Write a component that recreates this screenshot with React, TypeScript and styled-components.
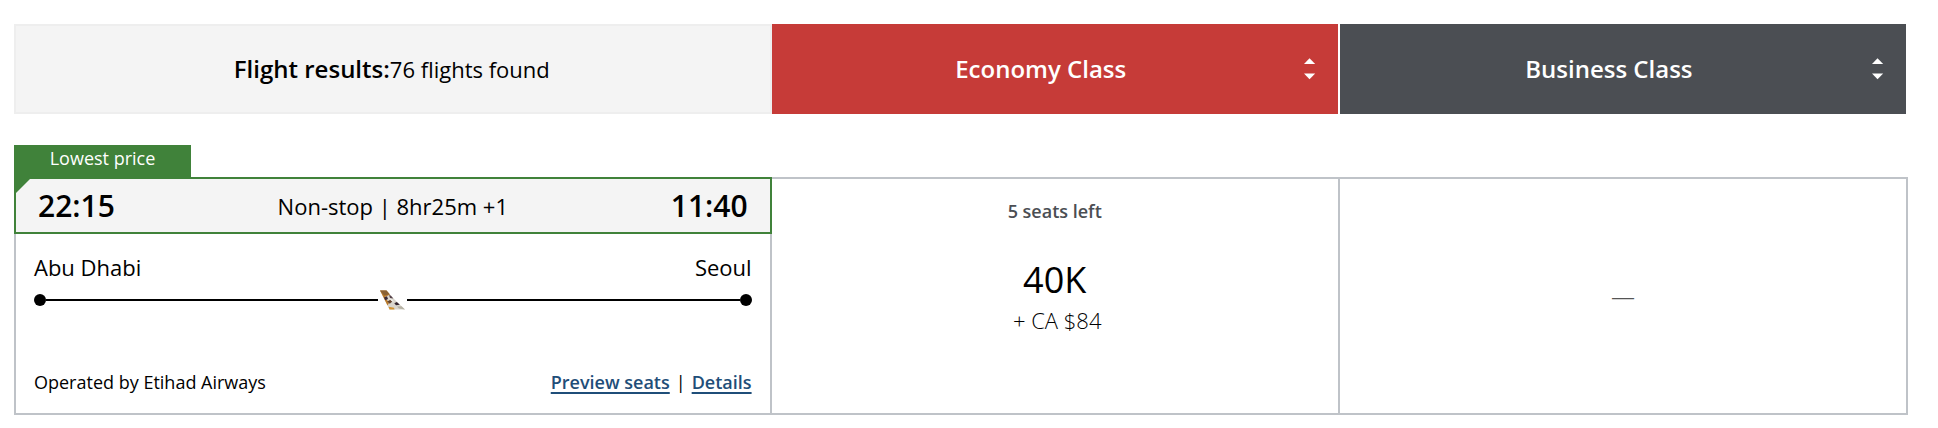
import React from "react";
import styled, { createGlobalStyle } from "styled-components";

const line = "#bfc3c8";
const green = "#40823a";

const GlobalStyle = createGlobalStyle`
  *, *::before, *::after { box-sizing: border-box; }
  body {
    margin: 0;
    background: #fff;
    color: #000;
    font-family: "Open Sans", "Noto Sans", sans-serif;
    font-size: 22px;
    line-height: 30px;
  }
`;

const Page = styled.main`
  padding: 24px 30px 12px 14px;
`;

const Columns = styled.div`
  display: grid;
  grid-template-columns: 40% 30% 30%;
`;

const Summary = styled.div`
  display: flex;
  align-items: center;
  justify-content: center;
  height: 90px;
  padding-right: 2px;
  background: #f4f4f4;
  border: 2px solid #eee;
  white-space: pre;
`;

const SummaryTitle = styled.h1`
  margin: 0;
  font-size: 24px;
  font-weight: 600;
`;

const CabinButton = styled.button<{ $color: string }>`
  display: flex;
  align-items: center;
  height: 90px;
  margin-right: 2px;
  padding: 0 22px 0 6px;
  border: 0;
  background: ${(p) => p.$color};
  color: #fff;
  font: inherit;
  font-size: 24px;
  font-weight: 600;
  cursor: pointer;
`;

const CabinName = styled.span`
  flex: 1;
  text-align: center;
`;

const Flight = styled.article`
  margin-top: 31px;
`;

const Tag = styled.div`
  width: 177px;
  height: 32px;
  background: ${green};
  color: #fff;
  font-size: 18px;
  font-weight: 500;
  line-height: 26px;
  text-align: center;
`;

const Itinerary = styled.section`
  display: flex;
  flex-direction: column;
`;

const Times = styled.div`
  position: relative;
  display: flex;
  align-items: center;
  justify-content: space-between;
  height: 57px;
  padding: 0 22px;
  border: 2px solid ${green};
  background: #f4f4f4;

  &::before {
    content: "";
    position: absolute;
    top: 0;
    left: 0;
    border-top: 14px solid ${green};
    border-right: 14px solid transparent;
  }
`;

const Time = styled.time`
  font-size: 30px;
  font-weight: 600;
`;

const Route = styled.div`
  padding: 18px 18px;
  border: solid ${line};
  border-width: 0 2px 2px;
`;

const Row = styled.div`
  display: flex;
  justify-content: space-between;
`;

const Track = styled.div`
  display: flex;
  align-items: center;
  height: 20px;
  margin: 8px 0 59px;
`;

const Stop = styled.span`
  width: 12px;
  height: 12px;
  border-radius: 50%;
  background: #000;
`;

const Leg = styled.span`
  flex: 1;
  height: 2px;
  background: #000;
`;

const Tail = styled.svg`
  width: 25px;
  height: 20px;
  margin: 0 2px;
`;

const Footer = styled(Row)`
  font-size: 18px;
  line-height: 26px;
`;

const Links = styled.div`
  display: flex;
  gap: 6px;
`;

const Link = styled.a`
  color: #1f4e79;
  font-weight: 600;
  text-decoration: underline;
  text-decoration-thickness: 2px;
  text-underline-offset: 3px;
`;

const Fare = styled.section`
  display: flex;
  flex-direction: column;
  align-items: center;
  padding-top: 17px;
  border: solid ${line};
  border-width: 2px 2px 2px 0;
`;

const NoFare = styled(Fare)`
  justify-content: center;
  padding-top: 0;
  color: #555;
  font-size: 24px;
  font-weight: 300;
`;

const Seats = styled.div`
  color: #4b4e53;
  font-size: 18px;
  font-weight: 600;
`;

const Points = styled.div`
  margin-top: 29px;
  font-size: 36px;
  line-height: 50px;
`;

const Cash = styled.div`
  padding-left: 5px;
  font-weight: 300;
`;

const SortIcon = () => (
  <svg width="12" height="22" viewBox="0 0 12 22" fill="#fff" aria-hidden="true">
    <path d="M5.5 0.3 11.2 6H0Z" />
    <path d="M0 15.4H11.2L5.5 21.3Z" />
  </svg>
);

const AirlineTail = () => (
  <Tail viewBox="0 0 25 20" role="img" aria-label="Etihad Airways">
    <path d="M0 .4H6.5L14 9 25 19.6H9.5Z" fill="#d9d5cc" />
    <path d="M0 .4H6.5L10 4.6 5 7 9 13 7.5 15.5Z" fill="#b97b2c" />
    <path d="M0 .4H6.5L9.5 4.2 4 5.5Z" fill="#8b6234" />
    <path d="M4 7.5 7 6.3 8 9 5.3 10.3Z" fill="#3a2a38" />
    <path d="M9 5 11 5.8 13.3 8.6 10 8Z" fill="#54414a" />
    <path d="M7.2 11.6 10.5 9.8 12.3 11.5 9.8 13.8Z" fill="#63432e" />
    <path d="M14.3 13.2 16.8 12 19.8 14.7 16 15.2Z" fill="#33252f" />
    <path d="M9 8.3 12.5 9.4 14 12.2 11.5 11Z" fill="#f0eee9" />
    <path d="M8.5 16.8 14 17.8 14.5 19.6H9.5Z" fill="#d1912f" />
    <path d="M17 16.5 21.5 16.3 25 19.6 19 18.5Z" fill="#b6b2a4" />
  </Tail>
);

export default function App() {
  return (
    <>
      <GlobalStyle />
      <Page>
        <Columns>
          <Summary>
            <SummaryTitle>Flight results:</SummaryTitle>
            <span>76 flights found</span>
          </Summary>
          <CabinButton type="button" $color="#c63b38">
            <CabinName>Economy Class</CabinName>
            <SortIcon />
          </CabinButton>
          <CabinButton type="button" $color="#4b4e53">
            <CabinName>Business Class</CabinName>
            <SortIcon />
          </CabinButton>
        </Columns>

        <Flight>
          <Tag>Lowest price</Tag>
          <Columns>
            <Itinerary>
              <Times>
                <Time>22:15</Time>
                <span>Non-stop | 8hr25m +1</span>
                <Time>11:40</Time>
              </Times>
              <Route>
                <Row>
                  <span>Abu Dhabi</span>
                  <span>Seoul</span>
                </Row>
                <Track>
                  <Stop />
                  <Leg />
                  <AirlineTail />
                  <Leg />
                  <Stop />
                </Track>
                <Footer>
                  <span>Operated by Etihad Airways</span>
                  <Links>
                    <Link href="#seats">Preview seats</Link>
                    <span>|</span>
                    <Link href="#details">Details</Link>
                  </Links>
                </Footer>
              </Route>
            </Itinerary>
            <Fare>
              <Seats>5 seats left</Seats>
              <Points>40K</Points>
              <Cash>+ CA $84</Cash>
            </Fare>
            <NoFare>—</NoFare>
          </Columns>
        </Flight>
      </Page>
    </>
  );
}
